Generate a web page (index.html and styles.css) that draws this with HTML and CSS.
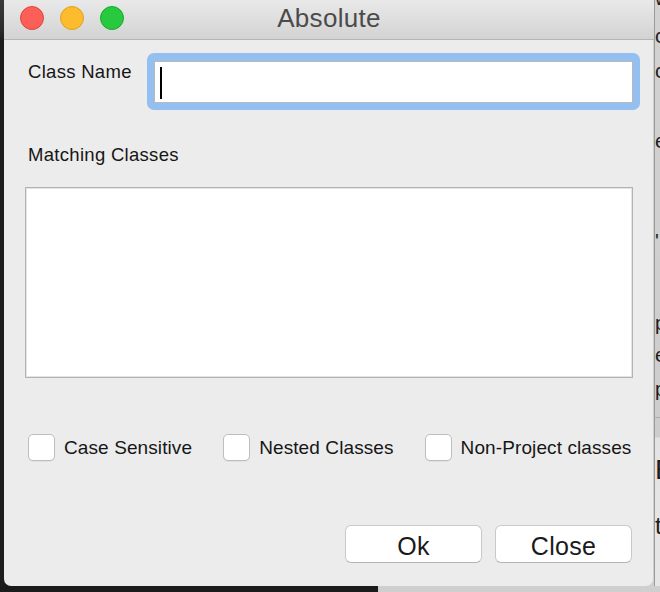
FILE: index.html
```html
<!DOCTYPE html>
<html>
<head>
<meta charset="utf-8">
<title>Absolute</title>
<link rel="stylesheet" href="styles.css">
</head>
<body>
<div class="desktop">
  <div class="left-strip"></div>
  <div class="window-cell">
    <div class="window">
      <div class="titlebar">
        <div class="lights">
          <span class="light red"></span>
          <span class="light yellow"></span>
          <span class="light green"></span>
        </div>
        <div class="title">Absolute</div>
        <div></div>
      </div>
      <div class="content">
        <div class="name-row">
          <label class="label name-label">Class Name</label>
          <div class="focus-ring">
            <div class="field"><span class="caret"></span></div>
          </div>
        </div>
        <div class="label matching-label">Matching Classes</div>
        <div class="list"></div>
        <div class="checks">
          <div class="check"><span class="box"></span><span class="check-text">Case Sensitive</span></div>
          <div class="check"><span class="box"></span><span class="check-text">Nested Classes</span></div>
          <div class="check"><span class="box"></span><span class="check-text">Non-Project classes</span></div>
        </div>
        <div class="buttons">
          <button class="btn">Ok</button>
          <button class="btn">Close</button>
        </div>
      </div>
    </div>
  </div>
  <div class="right-strip">
    <span class="frag f1">w</span>
    <span class="frag f2">c</span>
    <span class="frag f3">c</span>
    <span class="frag f4">e</span>
    <span class="frag f5">'</span>
    <span class="frag f6">p</span>
    <span class="frag f7">e</span>
    <span class="frag f8">p</span>
    <span class="frag-sep"></span>
    <span class="frag f9">E</span>
    <span class="frag f10">t</span>
  </div>
  <div class="bottom-strip">
    <div class="bottom-dark"></div>
    <div class="bottom-gray"></div>
  </div>
</div>
</body>
</html>
```

FILE: styles.css
```css
* { box-sizing: border-box; }
html, body { margin: 0; padding: 0; }
body {
  width: 660px;
  height: 592px;
  overflow: hidden;
  font-family: "Liberation Sans", Arial, sans-serif;
  background: #1b1b1b;
}
.desktop {
  display: grid;
  grid-template-columns: 4px 650px 6px;
  grid-template-rows: 586px 6px;
  width: 660px;
  height: 592px;
  overflow: hidden;
}
.left-strip {
  background: linear-gradient(to bottom, #3a3a3a 0, #2a2a2a 30px, #1d1d1d 40px, #1d1d1d 100%);
}
.window-cell {
  background: linear-gradient(to right, #1b1b1b 50%, #cfcfcf 50%);
}
.window {
  height: 586px;
  background: #ececec;
  border-radius: 0 0 7px 7px;
  display: flex;
  flex-direction: column;
  overflow: hidden;
  box-shadow: inset -1px 0 0 rgba(0,0,0,0.12);
}
.titlebar {
  height: 40px;
  flex: none;
  display: grid;
  grid-template-columns: 1fr auto 1fr;
  align-items: start;
  background: linear-gradient(to bottom, #e9e9e9, #d3d3d3);
  border-bottom: 1px solid #b6b6b6;
}
.lights {
  display: flex;
  gap: 16px;
  padding-left: 16px;
  padding-top: 6px;
}
.light {
  width: 24px;
  height: 24px;
  border-radius: 50%;
  display: block;
}
.red { background: #fc5f57; border: 1px solid #e0443e; }
.yellow { background: #fdbc2e; border: 1px solid #dea123; }
.green { background: #28c840; border: 1px solid #1aab29; }
.title {
  font-size: 26px;
  line-height: 36px;
  color: #4b4b4b;
  letter-spacing: 0.3px;
}
.content {
  flex: 1;
  padding: 0 21px;
  display: flex;
  flex-direction: column;
}
.label {
  font-size: 18.5px;
  line-height: 22px;
  color: #161616;
  letter-spacing: 0.3px;
}
.name-row {
  display: flex;
  align-items: flex-start;
  margin-top: 13px;
  margin-right: -7px;
}
.name-label {
  width: 122px;
  flex: none;
  padding-left: 3px;
  margin-top: 8px;
  white-space: nowrap;
}
.focus-ring {
  flex: 1;
  background: #93c0f0;
  border-radius: 7px;
  padding: 8px 7px 7px 7px;
}
.field {
  height: 42px;
  background: #fff;
  border: 1px solid #b9b9b9;
  padding: 5px 0 0 5px;
}
.caret {
  display: block;
  width: 2px;
  height: 32px;
  background: #000;
}
.matching-label {
  margin-top: 34px;
  padding-left: 3px;
}
.list {
  flex: none;
  margin-top: 21px;
  height: 191px;
  background: #fff;
  border: 1px solid #b3b3b3;
  box-shadow: inset 0 0 0 1px #e4e4e4;
}
.checks {
  display: flex;
  gap: 31px;
  margin-top: 56px;
  padding-left: 3px;
  margin-right: -21px;
}
.check {
  flex: none;
  display: flex;
  align-items: center;
  gap: 9px;
}
.box {
  flex: none;
  width: 27px;
  height: 27px;
  background: #fff;
  border: 1px solid #bdbdbd;
  border-radius: 5px;
  box-shadow: 0 1px 0 rgba(0,0,0,0.05);
}
.check-text {
  font-size: 19px;
  line-height: 22px;
  color: #161616;
  letter-spacing: 0.1px;
  white-space: nowrap;
}
.buttons {
  display: flex;
  justify-content: flex-end;
  gap: 13px;
  margin-top: 64px;
  margin-right: 1px;
}
.btn {
  width: 137px;
  height: 38px;
  background: #fff;
  border: 1px solid #c9c9c9;
  border-bottom-color: #b4b4b4;
  border-radius: 6px;
  font-family: "Liberation Sans", Arial, sans-serif;
  font-size: 25px;
  line-height: 32px;
  color: #1a1a1a;
  padding: 4px 0 0 0;
  letter-spacing: 0.3px;
}
.right-strip {
  background: linear-gradient(to bottom, #d2d2d2 0, #cdcdcd 437px, #e3e3e3 438px, #e6e6e6 100%);
  overflow: hidden;
  display: flex;
  flex-direction: column;
  font-size: 20px;
  line-height: 20px;
  color: #1e1e1e;
  box-shadow: inset 1px 0 0 #9a9a9a;
}
.frag { display: block; height: 20px; padding-left: 1px; white-space: nowrap; }
.f1 { margin-top: -12px; }
.f2 { margin-top: 18px; }
.f3 { margin-top: 15px; }
.f4 { margin-top: 50px; }
.f5 { margin-top: 80px; }
.f6 { margin-top: 62px; }
.f7 { margin-top: 12px; }
.f8 { margin-top: 14px; }
.frag-sep { display: block; height: 1px; margin-top: 18px; background: #aaa; }
.f9 { margin-top: 38px; font-size: 28px; height: 28px; line-height: 28px; }
.f10 { margin-top: 30px; font-size: 24px; height: 24px; line-height: 24px; }
.bottom-strip {
  grid-column: 1 / 4;
  display: flex;
}
.bottom-dark { width: 378px; background: #1b1b1b; }
.bottom-gray { flex: 1; background: #cfcfcf; }
```
